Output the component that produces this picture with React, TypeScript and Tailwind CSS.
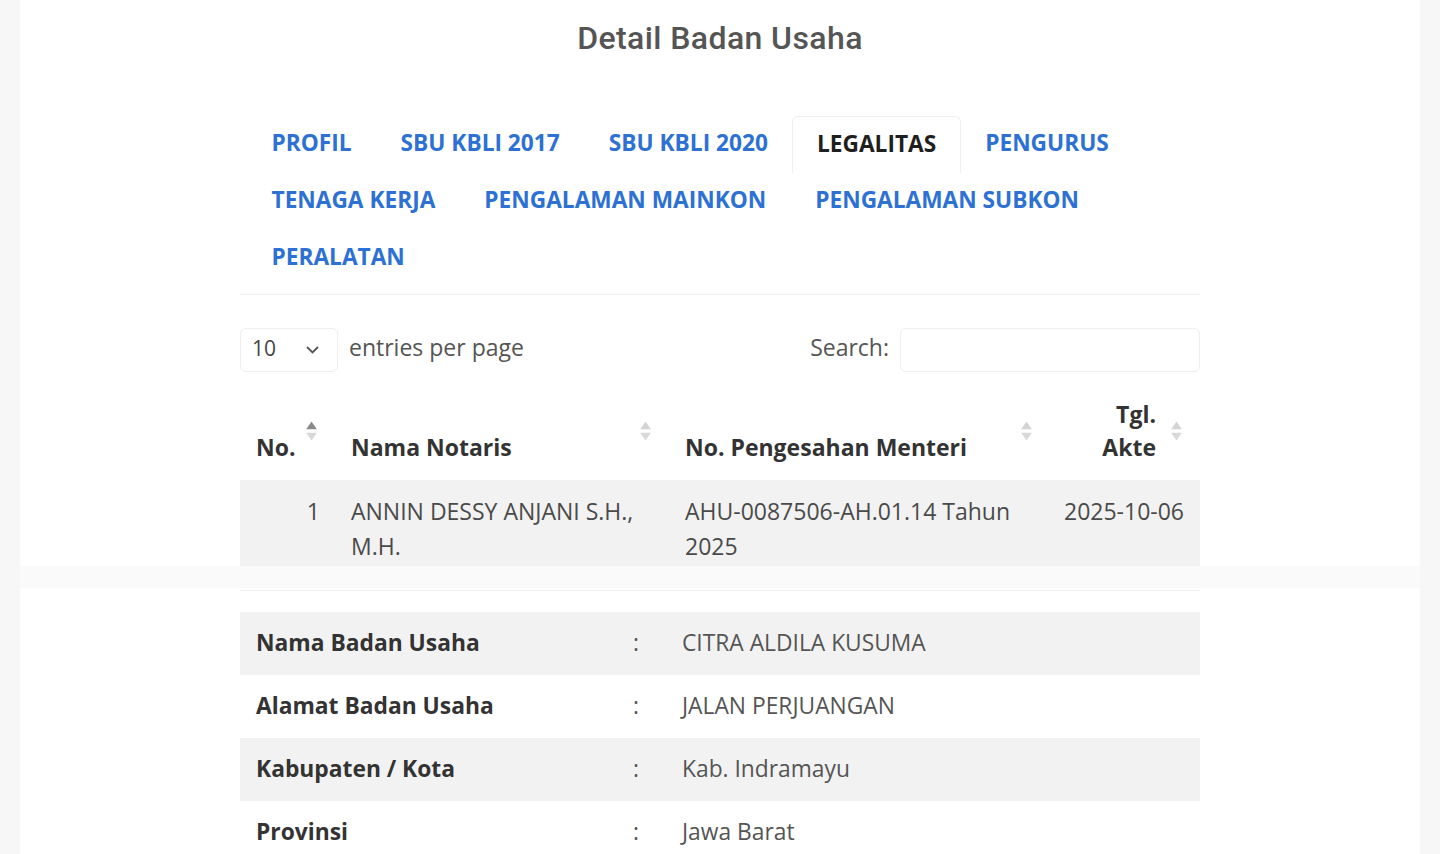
const tabs = [
  ["PROFIL", "SBU KBLI 2017", "SBU KBLI 2020", "LEGALITAS", "PENGURUS"],
  ["TENAGA KERJA", "PENGALAMAN MAINKON", "PENGALAMAN SUBKON"],
  ["PERALATAN"],
];

const details = [
  { label: "Nama Badan Usaha", value: "CITRA ALDILA KUSUMA" },
  { label: "Alamat Badan Usaha", value: "JALAN PERJUANGAN" },
  { label: "Kabupaten / Kota", value: "Kab. Indramayu" },
  { label: "Provinsi", value: "Jawa Barat" },
];

function SortIcon({ active = false }: { active?: boolean }) {
  return (
    <span className="absolute right-[18px] top-1/2 -translate-y-1/2 flex flex-col items-center gap-[3px]">
      <svg width="11" height="8" viewBox="0 0 11 8">
        <path d="M5.5 0 L11 8 L0 8 Z" fill={active ? "#8a8a8a" : "#d4d4d4"} />
      </svg>
      <svg width="11" height="8" viewBox="0 0 11 8">
        <path d="M0 0 L11 0 L5.5 8 Z" fill="#d9d9d9" />
      </svg>
    </span>
  );
}

function App() {
  const active = "LEGALITAS";

  return (
    <div className="min-h-screen bg-[#f7f7f7] px-[20px] font-['Open_Sans',sans-serif]">
      <div className="bg-white min-h-[854px]">
        <h1 className="pt-[19px] text-center font-['Roboto',sans-serif] font-medium text-[32px] tracking-[0.4px] leading-[38px] text-[#555]">
          Detail Badan Usaha
        </h1>

        <div className="w-[960px] mx-auto mt-[59px]">
          {/* tabs */}
          <div className="pl-[7px] pb-[7px] border-b border-[#eeeeee]">
            {tabs.map((row, i) => (
              <div key={i} className="flex">
                {row.map((t) => (
                  <div
                    key={t}
                    className={`h-[57px] pb-[2px] px-[23.5px] flex items-center text-[22.7px] font-bold cursor-pointer ${
                      t === active
                        ? "text-[#1f1f1f] border border-b-0 border-[#efefef] rounded-t-[6px]"
                        : "text-[#2c71d3] border border-transparent"
                    }`}
                  >
                    {t}
                  </div>
                ))}
              </div>
            ))}
          </div>

          {/* controls */}
          <div className="mt-[33px] flex items-center justify-between text-[23px] text-[#555]">
            <div className="flex items-center gap-[11px]">
              <div className="w-[98px] h-[44px] border border-[#eeeeee] rounded-[6px] flex items-center justify-between pl-[11px] pr-[18px] text-[21px] text-[#444]">
                <span className="pb-[2px]">10</span>
                <svg width="13" height="8" viewBox="0 0 13 8" fill="none">
                  <path d="M1 1 L6.5 6.5 L12 1" stroke="#555" strokeWidth="1.8" />
                </svg>
              </div>
              <span className="pb-[6px]">entries per page</span>
            </div>
            <div className="flex items-center gap-[11px]">
              <span className="pb-[5px]">Search:</span>
              <input className="w-[300px] h-[44px] border border-[#eeeeee] rounded-[6px] outline-none px-3" />
            </div>
          </div>

          {/* table */}
          <table className="mt-[10px] w-full border-collapse text-[23px]">
            <thead>
              <tr className="text-[#333] font-bold">
                <th className="relative w-[95px] text-left align-bottom pl-[16px] pr-[30px] py-[16px] leading-[33px] font-bold">
                  No.
                  <SortIcon active />
                </th>
                <th className="relative w-[334px] text-left align-bottom pl-[16px] pr-[30px] py-[16px] leading-[33px] font-bold">
                  Nama Notaris
                  <SortIcon />
                </th>
                <th className="relative w-[381px] text-left align-bottom pl-[16px] pr-[30px] py-[16px] leading-[33px] font-bold">
                  No. Pengesahan Menteri
                  <SortIcon />
                </th>
                <th className="relative text-right align-bottom pl-[16px] pr-[44px] py-[16px] leading-[33px] font-bold">
                  Tgl.
                  <br />
                  Akte
                  <SortIcon />
                </th>
              </tr>
            </thead>
            <tbody>
              <tr className="bg-[#f2f2f2] text-[#4a4a4a] leading-[35px] align-top">
                <td className="text-right pr-[15px] pt-[14px] pb-[2px]">1</td>
                <td className="pl-[16px] pr-[16px] pt-[14px] pb-[2px]">ANNIN DESSY ANJANI S.H., M.H.</td>
                <td className="pl-[16px] pr-[16px] pt-[14px] pb-[2px]">AHU-0087506-AH.01.14 Tahun 2025</td>
                <td className="text-right pr-[16px] pt-[14px] pb-[2px]">2025-10-06</td>
              </tr>
            </tbody>
          </table>
        </div>

        <div className="h-[22px] bg-[#fafafa]" />

        <div className="w-[960px] mx-auto mt-[2px] border-t border-[#eeeeee] pt-[21px]">
          {details.map((d, i) => (
            <div
              key={d.label}
              className={`flex items-center h-[63px] text-[22.8px] ${i % 2 === 0 ? "bg-[#f2f2f2]" : ""}`}
            >
              <div className="w-[377px] pl-[16px] font-bold text-[#333]">{d.label}</div>
              <div className="w-[49px] pl-[16px] text-[#555]">:</div>
              <div className="pl-[16px] text-[#555]">{d.value}</div>
            </div>
          ))}
        </div>
      </div>
    </div>
  );
}

export default App;
